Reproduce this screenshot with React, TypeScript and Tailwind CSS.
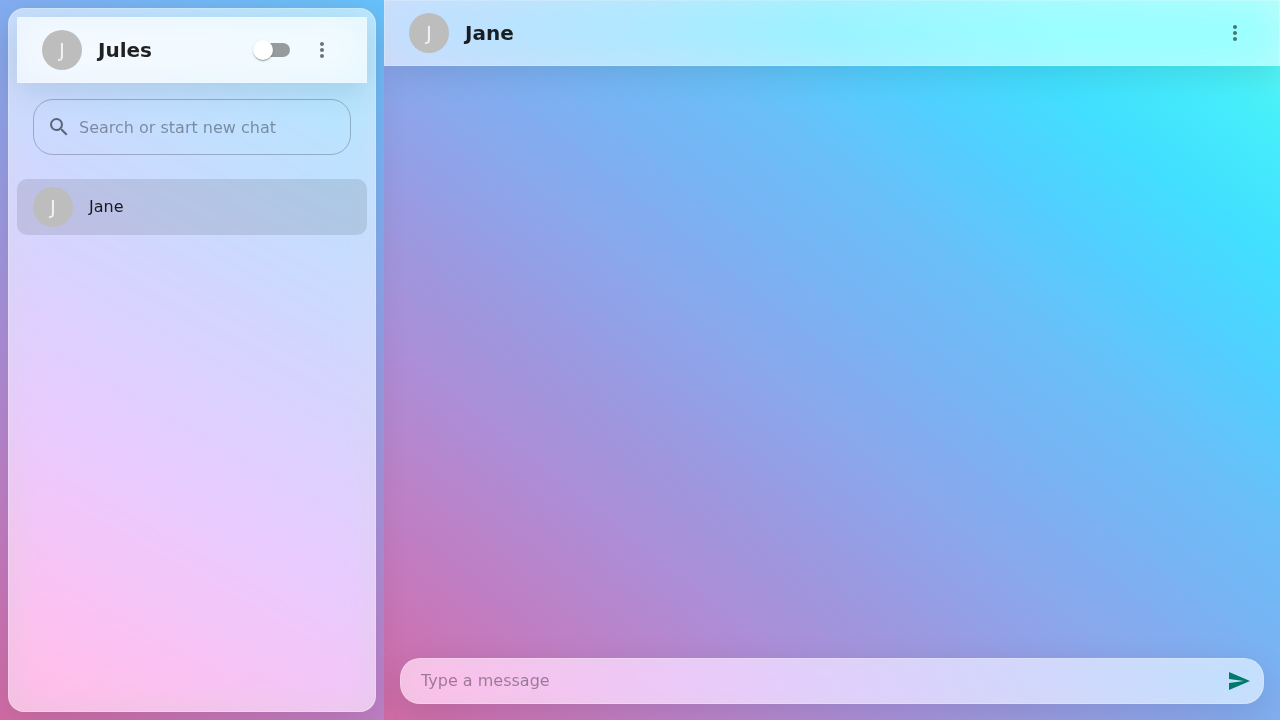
import { MdMoreVert, MdSearch, MdSend } from "react-icons/md";

const backdrop =
  "bg-[linear-gradient(to_right_top,#d16ba5,#c777b9,#ba83ca,#aa8fd8,#9a9ae1,#8aa7ec,#79b3f4,#69bff8,#52cffe,#41dfff,#46eefa,#5ffbf1)]";

const glass =
  "border border-[rgba(255,255,255,0.2)] bg-[rgba(255,255,255,0.6)] shadow-[0_8px_32px_0_rgba(0,0,0,0.1)] backdrop-blur-[20px] backdrop-saturate-[180%]";

function Avatar({ name }: { name: string }) {
  return (
    <span
      aria-hidden="true"
      className="flex size-10 shrink-0 items-center justify-center rounded-full bg-[#bdbdbd] text-xl leading-5 text-white/80"
    >
      {name.charAt(0)}
    </span>
  );
}

function MenuButton({ label }: { label: string }) {
  return (
    <button type="button" aria-label={label} className="flex size-10 items-center justify-center rounded-full text-black/54">
      <MdMoreVert size={24} />
    </button>
  );
}

function ThemeSwitch() {
  return (
    <label className="flex h-10 w-[58px] shrink-0 cursor-pointer items-center px-3">
      <input type="checkbox" role="switch" aria-label="Dark mode" className="peer sr-only" />
      <span className="flex h-[14px] w-[34px] items-center rounded-full bg-black/38">
        <span className="-ml-[3px] size-5 rounded-full bg-white shadow-[0_2px_1px_-1px_rgba(0,0,0,0.2),0_1px_1px_0_rgba(0,0,0,0.14),0_1px_3px_0_rgba(0,0,0,0.12)]" />
      </span>
    </label>
  );
}

function Sidebar() {
  return (
    <aside className="flex w-[30%] shrink-0 flex-col p-2">
      <div className={`flex flex-1 flex-col rounded-2xl p-2 ${glass}`}>
        <header className={`flex items-center gap-4 px-6 py-3 ${glass}`}>
          <Avatar name="Jules" />
          <h1 className="flex-1 text-xl leading-8 font-bold">Jules</h1>
          <div className="flex">
            <ThemeSwitch />
            <MenuButton label="Account menu" />
          </div>
        </header>
        <div className="p-4">
          <label className="flex h-14 items-center gap-2 rounded-[20px] border border-black/23 px-[13px]">
            <MdSearch size={24} className="shrink-0 text-black/54" />
            <input
              type="search"
              aria-label="Search or start new chat"
              placeholder="Search or start new chat"
              className="h-7 min-w-0 flex-1 bg-transparent pt-px text-base outline-none placeholder:text-black/38"
            />
          </label>
        </div>
        <nav aria-label="Chats" className="py-2">
          <a href="#jane" className="flex items-center gap-4 rounded-[10px] bg-black/10 px-4 py-2">
            <Avatar name="Jane" />
            <span className="text-base">Jane</span>
          </a>
        </nav>
      </div>
    </aside>
  );
}

function Conversation() {
  return (
    <main className={`flex flex-1 flex-col overflow-hidden ${backdrop}`}>
      <header className={`flex items-center gap-4 px-6 py-3 ${glass}`}>
        <Avatar name="Jane" />
        <h2 className="flex-1 text-xl leading-8 font-bold">Jane</h2>
        <MenuButton label="Chat menu" />
      </header>
      <div className="flex-1" />
      <div className="p-4">
        <form className={`flex items-center rounded-[20px] py-[2px] pr-1 pl-5 ${glass}`}>
          <input
            type="text"
            aria-label="Type a message"
            placeholder="Type a message"
            className="min-w-0 flex-1 bg-transparent text-base outline-none placeholder:text-black/38"
          />
          <button type="button" aria-label="Send" className="flex size-10 items-center justify-center rounded-full text-[#00796b]">
            <MdSend size={24} />
          </button>
        </form>
      </div>
    </main>
  );
}

export default function App() {
  return (
    <div className={`flex min-h-screen font-['DejaVu_Sans',sans-serif] text-black/87 ${backdrop}`}>
      <Sidebar />
      <Conversation />
    </div>
  );
}
